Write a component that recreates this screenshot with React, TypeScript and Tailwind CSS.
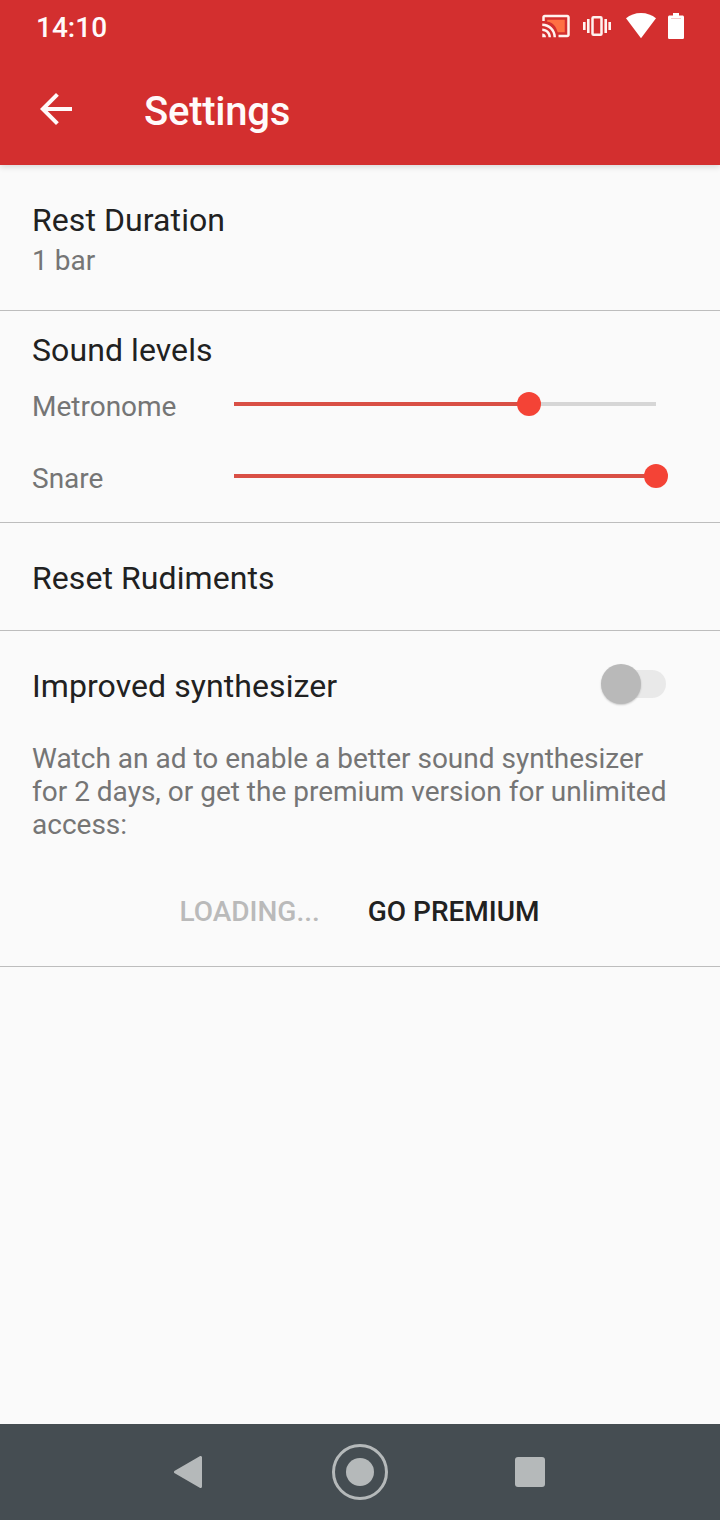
import React from "react";

const CastIcon = () => (
    <svg className="h-[30px] w-[30px]" viewBox="0 0 24 24">
        <path
            fill="#ff7043"
            d="M5 7h14v10h-5.63C12.09 12.49 9.51 8.91 5 8.63z"
        />
        <path
            fill="#fff3f0"
            d="M1 18v3h3c0-1.66-1.34-3-3-3zm0-4v2c2.76 0 5 2.24 5 5h2c0-3.87-3.13-7-7-7zm0-4v2c4.97 0 9 4.03 9 9h2c0-6.08-4.93-11-11-11zm20-7H3c-1.1 0-2 .9-2 2v3h2V5h18v14h-7v2h7c1.1 0 2-.9 2-2V5c0-1.1-.9-2-2-2z"
        />
    </svg>
);

const VibrateIcon = () => (
    <svg className="h-7 w-7" viewBox="0 0 28 28" fill="#fff3f0">
        <path d="M0 10h2.6v8H0zM4 7h2.6v14H4zM21.4 7H24v14h-2.6zM25.4 10H28v8h-2.6z" />
        <rect
            x="9.5"
            y="5.2"
            width="9"
            height="17.6"
            rx="1"
            fill="none"
            stroke="#fff3f0"
            strokeWidth="2.5"
        />
    </svg>
);

const WifiIcon = () => (
    <svg className="h-[26px] w-[30px]" viewBox="0 0 30 26" fill="#fff">
        <path d="M15 25.3 0 5.2C4 2 9.200 0 15 0s11 2 15 5.200z" />
    </svg>
);

const BatteryIcon = () => (
    <svg className="h-[26px] w-4" viewBox="0 0 16 26" fill="#fff">
        <path d="M5 0h6v2.500h3.400c.9 0 1.600.7 1.600 1.600v20.300c0 .9-.7 1.600-1.600 1.600H1.600C.7 26 0 25.300 0 24.400V4.100c0-.9.7-1.600 1.600-1.600H5z" />
        <path d="M3 5h10v.8H3z" fill="#f3b9b9" />
    </svg>
);

const levels = [
    { name: "Metronome", value: 70 },
    { name: "Snare", value: 100 },
];

const Slider = ({ value }: { value: number }) => (
    <div className="relative flex h-6 w-[422px] items-center">
        <div className="h-1 w-full bg-[#d6d6d6]">
            <div className="h-1 bg-[#d94f45]" style={{ width: `${value}%` }} />
        </div>
        <div
            className="absolute h-6 w-6 -translate-x-1/2 rounded-full bg-[#f44336]"
            style={{ left: `${value}%` }}
        />
    </div>
);

const Header = () => (
    <header className="z-10 h-[165px] bg-[#d32f2f] text-[#fffafa] shadow-[0_2px_6px_rgba(0,0,0,0.14)]">
        <div className="flex h-[54px] items-center justify-between pr-9 pl-9">
            <span className="pt-0.5 text-[28px] leading-[54px] font-medium">
                14:10
            </span>
            <div className="flex items-center pb-0.5">
                <CastIcon />
                <div className="ml-3">
                    <VibrateIcon />
                </div>
                <div className="ml-[15px]">
                    <WifiIcon />
                </div>
                <div className="ml-3">
                    <BatteryIcon />
                </div>
            </div>
        </div>
        <div className="flex h-[110px] items-center pl-8">
            <svg className="h-12 w-12" viewBox="0 0 24 24" fill="currentColor">
                <path d="M20 11H7.830l5.590-5.590L12 4l-8 8 8 8 1.410-1.410L7.830 13H20z" />
            </svg>
            <h1 className="ml-16 pt-1.5 text-[40px] font-medium tracking-[-0.25px]">
                Settings
            </h1>
        </div>
    </header>
);

const NavigationBar = () => (
    <nav className="flex h-24 items-center bg-[#454d52] pl-[174px]">
        <svg className="h-8 w-7" viewBox="0 0 28 32">
            <path
                d="M1.500 16 26.500 1.500v29z"
                fill="#b5b9ba"
                stroke="#b5b9ba"
                strokeWidth="3"
                strokeLinejoin="round"
            />
        </svg>
        <div className="ml-[130px] flex h-14 w-14 items-center justify-center rounded-full border-[3px] border-[#b5b9ba]">
            <div className="h-7 w-7 rounded-full bg-[#b5b9ba]" />
        </div>
        <div className="ml-[127px] h-[30px] w-[30px] rounded-[3px] bg-[#b5b9ba]" />
    </nav>
);

export default function App() {
    return (
        <div className="flex h-[1520px] w-[720px] flex-col bg-[#fafafa] font-['Roboto',sans-serif] text-[#212121]">
            <Header />
            <main className="flex-1 text-[32px] leading-[38px] tracking-[0.08px]">
                <section className="h-[146px] border-b border-[#bdbdbd] px-8 pt-9">
                    <h2>Rest Duration</h2>
                    <p className="mt-[5px] text-[28px] leading-[33px] tracking-normal text-[#757575]">
                        1 bar
                    </p>
                </section>
                <section className="h-[212px] border-b border-[#bdbdbd] px-8 pt-5">
                    <h2 className="mb-[-1px]">Sound levels</h2>
                    {levels.map((level) => (
                        <div key={level.name} className="flex h-[72px] items-center">
                            <span className="w-[202px] pt-[5px] text-[28px] leading-[33px] tracking-normal text-[#757575]">
                                {level.name}
                            </span>
                            <Slider value={level.value} />
                        </div>
                    ))}
                </section>
                <section className="h-[108px] border-b border-[#bdbdbd] px-8 pt-9">
                    <h2>Reset Rudiments</h2>
                </section>
                <section className="h-[336px] border-b border-[#bdbdbd] px-8 pt-9">
                    <div className="flex h-[38px] items-center justify-between pr-[22px]">
                        <h2>Improved synthesizer</h2>
                        <div className="relative mb-1 h-7 w-[62px] rounded-full bg-[#e9e9e9]">
                            <div className="absolute -top-1.5 -left-[3px] h-10 w-10 rounded-full bg-[#b9b9b9] shadow-[0_1px_2px_rgba(0,0,0,0.2)]" />
                        </div>
                    </div>
                    <p className="mt-[37px] text-[28px] leading-[33px] tracking-normal whitespace-nowrap text-[#757575]">
                        Watch an ad to enable a better sound synthesizer
                        <br />
                        for 2 days, or get the premium version for unlimited
                        <br />
                        access:
                    </p>
                    <div className="mt-[54px] flex justify-center gap-12 pr-px text-[28px] leading-[33px] font-medium tracking-normal">
                        <button className="text-[#bababa]">LOADING...</button>
                        <button>GO PREMIUM</button>
                    </div>
                </section>
            </main>
            <NavigationBar />
        </div>
    );
}
